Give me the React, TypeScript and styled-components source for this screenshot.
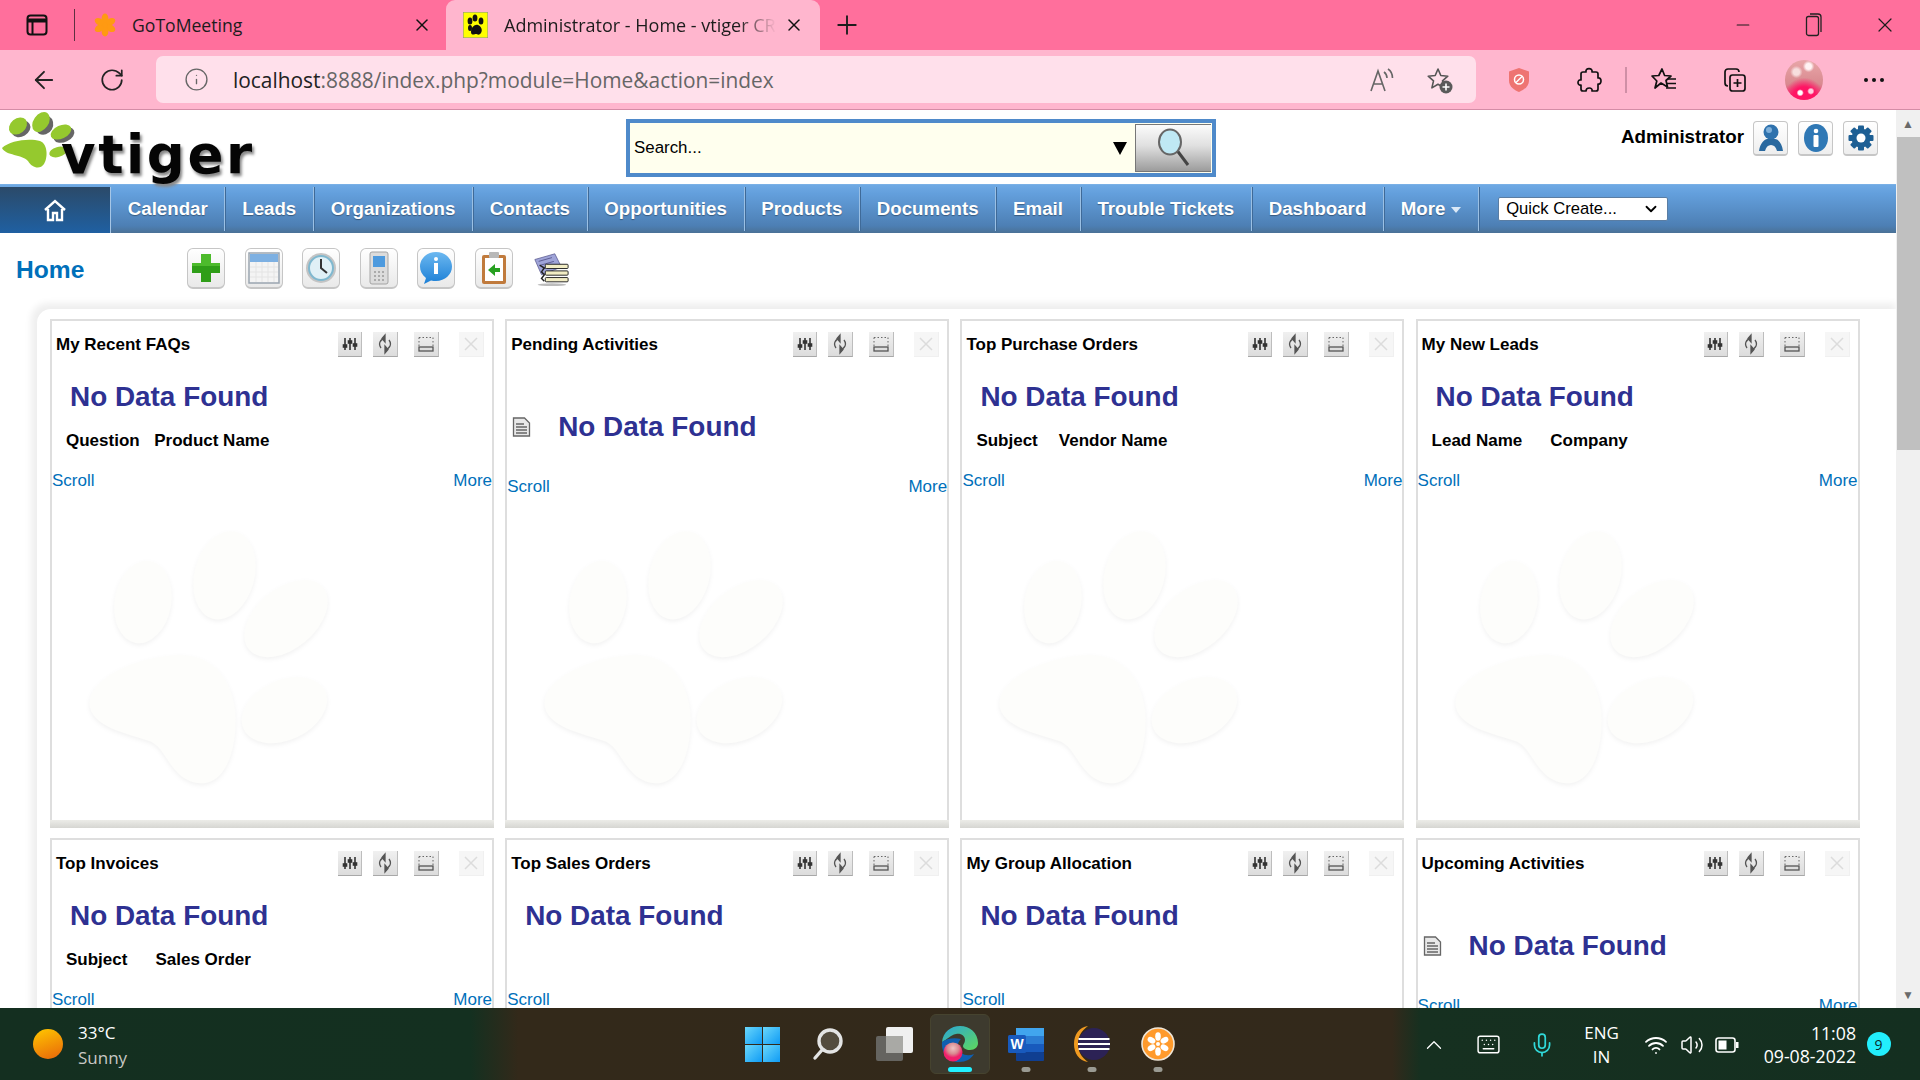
import React from 'react';
import styled, { createGlobalStyle } from 'styled-components';
import { ArrowLeft, RotateCw, Info, X, Plus, Minus, ChevronUp, ChevronDown, Keyboard, Mic, Volume2, Wifi } from 'lucide-react';

const Global = createGlobalStyle`
  html, body { margin: 0; height: 100%; overflow: hidden; background: #fff; }
  #root { height: 100%; }
  * { box-sizing: border-box; }
`;
const Page = styled.div`
  height: 1080px; width: 1920px; display: flex; flex-direction: column; overflow: hidden;
  font-family: "Liberation Sans", Arial, sans-serif;
`;
/* ---------- browser chrome ---------- */
const TabStrip = styled.div`
  height: 50px; flex: none; display: flex; background: #ff6f9c; color: #1c1c1c;
  font-family: "Open Sans", "Noto Sans", sans-serif; font-size: 18px;
`;
const StripSlot = styled.div`
  width: 74px; display: flex; align-items: center; justify-content: center;
`;
const StripDivider = styled.div`
  width: 1px; height: 32px; margin-top: 9px; background: #5d3040;
`;
const Tab = styled.div<{ $active?: boolean }>`
  width: ${p => (p.$active ? 374 : 371)}px; height: 50px; display: flex; align-items: center;
  padding-left: ${p => (p.$active ? 17 : 18)}px; border-radius: 9px 9px 0 0;
  background: ${p => (p.$active ? '#ffb6ce' : 'transparent')};
`;
const TabTitle = styled.div<{ $fade?: boolean }>`
  flex: none; width: 272px; margin-left: ${p => (p.$fade ? 16 : 15)}px; white-space: nowrap; overflow: hidden;
  font-size: ${p => (p.$fade ? 18 : 17.6)}px;
  ${p => p.$fade && 'mask-image: linear-gradient(90deg, #000 86%, transparent 100%);'}
`;
const TabClose = styled.div`
  margin-left: 8px; display: flex; color: #111;
`;
const NewTab = styled.div`
  width: 54px; display: flex; align-items: center; justify-content: center; color: #1c1c1c;
`;
const Grow = styled.div`flex: 1;`;
const WinBtn = styled.div`
  width: 71px; display: flex; align-items: center; justify-content: center;
`;
const Toolbar = styled.div`
  height: 60px; flex: none; display: flex; align-items: center; background: #ffb6ce;
  border-bottom: 1px solid #d48ca6;
`;
const NavButtons = styled.div`
  width: 156px; display: flex; align-items: center; gap: 41px; padding-left: 30px; color: #222;
`;
const UrlBox = styled.div`
  width: 1320px; height: 47px; border-radius: 7px; background: #ffe0eb; display: flex; align-items: center;
  padding: 0 22px 0 28px; color: #666; font-family: "Open Sans", "Noto Sans", sans-serif; font-size: 20.9px;
`;
const UrlText = styled.div`
  margin-left: 24px; white-space: nowrap;
  b { font-weight: 400; color: #222; }
`;
const UrlActions = styled.div`
  margin-left: auto; display: flex; align-items: center; gap: 30px;
`;
const ActionSlots = styled.div`
  display: flex; align-items: center; margin-left: 8px;
`;
const ActionSlot = styled.div`
  width: 70px; display: flex; align-items: center; justify-content: center; color: #1a1a1a;
`;
const ActionDivider = styled.div`
  width: 2px; height: 26px; margin: 0 2px 0 1px; background: #cf8fa6;
`;
const Avatar = styled.div`
  width: 38px; height: 40px; border-radius: 50%;
  background:
    radial-gradient(circle at 62% 16%, #fff3f3 0 7%, transparent 14%),
    radial-gradient(circle at 30% 30%, #f7dede 0 8%, transparent 16%),
    radial-gradient(circle at 40% 82%, #ffffff 0 5%, transparent 9%),
    radial-gradient(circle at 68% 78%, #ffd0e0 0 5%, transparent 9%),
    radial-gradient(circle at 50% 95%, #ff1464 0 26%, transparent 48%),
    linear-gradient(180deg, #e8a6a8, #d98a90 60%, #f02a6e);
`;
/* ---------- app window ---------- */
const Viewport = styled.div`
  flex: 1; min-height: 0; display: flex; background: #fff;
`;
const Content = styled.div`
  flex: 1; min-width: 0; overflow: hidden;
`;
const Scrollbar = styled.div`
  width: 24px; flex: none; background: #f0f0f0; display: flex; flex-direction: column; align-items: center; color: #6a6a6a; font-size: 12px;
`;
const ScrollArrow = styled.div`
  height: 27px; display: flex; align-items: center; justify-content: center; flex: none; width: 100%;
`;
const ScrollThumb = styled.div`
  width: 23px; margin-left: 1px; height: 313px; background: #c0c0c0; flex: none;
`;
const ScrollGap = styled.div`flex: 1;`;
const Masthead = styled.div`
  height: 74px; display: flex; background: #fff;
`;
const Logo = styled.div`
  width: 626px; display: flex; align-items: flex-start; flex: none;
`;
const LogoWord = styled.div`
  margin: 15px 0 0 -19px; font-family: "DejaVu Sans", sans-serif; font-weight: 700; font-size: 53px; line-height: 60px;
  letter-spacing: 2.6px; color: #050505; text-shadow: 2px 3px 3px #888;
`;
const SearchBox = styled.div`
  width: 590px; height: 58px; margin-top: 9px; border: 4px solid #4f8aca; display: flex; background: #ffffee; flex: none;
`;
const SearchText = styled.div`
  flex: 1; display: flex; align-items: center; padding-left: 4px; font-size: 16.9px; color: #000;
`;
const SearchArrow = styled.div`
  width: 0; height: 0; margin-right: 8px; align-self: center; border-left: 7px solid transparent; border-right: 7px solid transparent; border-top: 13px solid #000;
`;
const SearchButton = styled.div`
  width: 76px; margin: 1px 1px 1px 0; border: 1px solid #777; border-right: 0; background: linear-gradient(180deg, #fbfbfb, #e0e0e0 45%, #9c9c9c);
  display: flex; align-items: center; justify-content: center;
`;
const UserArea = styled.div`
  flex: 1; display: flex; padding: 11px 18px 0 0; justify-content: flex-end; gap: 10px;
`;
const UserName = styled.div`
  font-weight: 700; font-size: 18.75px; line-height: 32px; color: #000; margin-right: -1px;
`;
const UserBtn = styled.div`
  width: 35px; height: 35px; border: 1px solid #c6c6c6; border-bottom-width: 2px; border-radius: 4px; background: linear-gradient(#fff, #eeeeee);
  display: flex; align-items: center; justify-content: center;
`;
const Nav = styled.div`
  height: 49px; display: flex; padding-top: 2px; background: linear-gradient(180deg, #6ea9e4 0, #639fdc 18%, #4d7fb4 85%, #4a7196 100%);
  border-top: 1px solid #79b0e6;
`;
const HomeTab = styled.div`
  width: 111px; flex: none; display: flex; align-items: center; justify-content: center;
  background: linear-gradient(180deg, #2b4a69, #1f60a2); border-right: 1px solid #a6c6e6;
`;
const NavItem = styled.div`
  padding: 0 16.75px; display: flex; align-items: center; gap: 6px; color: #fff; font-size: 18.7px; font-weight: 700; white-space: nowrap; height: 44px;
  border-right: 1px solid #9bc0e4; box-shadow: 1px 0 0 #3f6a98;
  text-shadow: 0 1px 1px rgba(0,0,0,.35);
`;
const Caret = styled.span`
  width: 0; height: 0; margin-top: 2px; border-left: 5px solid transparent; border-right: 5px solid transparent; border-top: 6px solid #dbe9f7;
`;
const QuickCreate = styled.div`
  margin: 10px 0 0 19px; width: 170px; height: 24px; border: 1px solid #5a7da3; border-radius: 2px; background: #fff;
  display: flex; align-items: center; justify-content: space-between; padding: 0 7px; font-size: 16.6px; color: #000;
`;
const HomeBar = styled.div`
  height: 65px; display: flex; align-items: flex-start; padding: 15px 0 0 16px;
`;
const HomeTitle = styled.div`
  width: 171px; flex: none; color: #0070ba; font-size: 24.6px; font-weight: 700; line-height: 44px;
`;
const QuickIcons = styled.div`
  display: flex; gap: 19.5px;
`;
const QuickBtn = styled.div<{ $plain?: boolean }>`
  width: 38px; height: 41px; border-radius: 6px; display: flex; align-items: center; justify-content: center;
  ${p => !p.$plain && 'border: 1px solid #c6c6c6; border-bottom-width: 2px; background: linear-gradient(#fff, #e9e9e9);'}
`;
const Board = styled.div`
  margin: 11px 0 0 37px; padding: 10px 0 0 13px; background: #fff; border-radius: 14px 0 0 0;
  box-shadow: -3px -3px 7px 3px #efefef; display: grid; grid-template-columns: repeat(4, 444px); column-gap: 11.2px; row-gap: 10px;
`;
const Panel = styled.div`
  position: relative; height: 509px; border: 2px solid #dedede; display: flex; flex-direction: column; background: #fff; border-bottom: 0;
`;
const PawMark = styled.svg`
  position: absolute; left: 36px; top: 209px; width: 243px; height: 257px; filter: drop-shadow(0 2px 2px rgba(0,0,0,.05));
`;
const PanelHead = styled.div`
  height: 60px; flex: none; display: flex; padding: 11px 8px 0 4px; position: relative;
`;
const PanelTitle = styled.div`
  flex: 1; font-size: 17px; font-weight: 700; line-height: 26px; color: #000;
`;
const HeadBtn = styled.div<{ $gap: number; $faded?: boolean; $w?: number }>`
  width: ${p => p.$w ?? 25}px; height: 25px; margin-left: ${p => p.$gap}px; display: flex; align-items: center; justify-content: center;
  background: ${p => (p.$faded ? '#f6f6f6' : 'linear-gradient(#f0f0f0, #dcdcdc)')};
  border-right: 1px solid ${p => (p.$faded ? '#f0f0f0' : '#bdbdbd')}; border-bottom: 1px solid ${p => (p.$faded ? '#f0f0f0' : '#a8a8a8')};
`;
const NoDataRow = styled.div<{ $doc?: boolean }>`
  display: flex; align-items: center; position: relative; height: 32px; padding-left: ${p => (p.$doc ? 5 : 18)}px;
  margin-top: ${p => (p.$doc ? 30 : 0)}px;
`;
const NoData = styled.div<{ $doc?: boolean }>`
  margin-left: ${p => (p.$doc ? 27 : 0)}px; font-size: 27.9px; font-weight: 700; color: #2e3192; white-space: nowrap;
`;
const Columns = styled.div<{ $gap: number }>`
  height: 20px; margin-top: 18px; padding-left: 14px; display: flex; gap: ${p => p.$gap}px; font-size: 17px; line-height: 20px; font-weight: 700; color: #000; position: relative;
`;
const LinkRow = styled.div<{ $top: number }>`
  margin-top: ${p => p.$top}px; display: flex; justify-content: space-between; font-size: 17px; line-height: 20px; color: #0070ba; position: relative;
`;
const PanelFoot = styled.div`
  margin-top: auto; height: 8px; margin-left: -2px; margin-right: -2px; flex: none; background: linear-gradient(#ecece8, #d6d6d2);
`;
/* ---------- taskbar ---------- */
const Taskbar = styled.div`
  height: 72px; flex: none; display: flex; align-items: center; color: #fff;
  font-family: "Open Sans", "Noto Sans", sans-serif;
  background: linear-gradient(90deg, #142f20 0, #143020 24.5%, #33291a 27%, #33291b 72.5%, #163020 74%, #142f20 100%);
`;
const Weather = styled.div`
  width: 729px; flex: none; padding-left: 33px; display: flex; align-items: center; gap: 15px;
`;
const Sun = styled.div`
  width: 30px; height: 30px; border-radius: 50%; background: linear-gradient(160deg, #ffc800, #e8650a);
`;
const WeatherText = styled.div`
  font-size: 17px; line-height: 25px; margin-top: 2px;
  small { display: block; font-size: 17px; color: #c8c8c4; }
`;
const Apps = styled.div`
  display: flex; align-items: center;
`;
const AppSlot = styled.div<{ $on?: boolean }>`
  width: ${p => (p.$on ? 60 : 66)}px; margin: 0 ${p => (p.$on ? 3 : 0)}px; height: 60px; position: relative; display: flex; align-items: center; justify-content: center; border-radius: 6px;
  ${p => p.$on && 'background: #3d3a2e; border: 1px solid #46432f;'}
`;
const AppMark = styled.span<{ $on?: boolean }>`
  position: absolute; bottom: ${p => (p.$on ? 1 : 2)}px; left: 50%; transform: translateX(-50%);
  width: ${p => (p.$on ? 24 : 9)}px; height: 5px; border-radius: 3px; background: ${p => (p.$on ? '#22f0ff' : '#9a9a92')};
`;
const Tray = styled.div`
  margin-left: auto; display: flex; align-items: center; height: 100%;
`;
const TraySlot = styled.div<{ $w: number }>`
  width: ${p => p.$w}px; display: flex; align-items: center; justify-content: center; text-align: center; font-size: 17px; line-height: 24px; padding-top: 1px;
`;
const Clock = styled.div`
  width: 108px; text-align: right; font-size: 17.7px; line-height: 23px; padding-top: 2px; white-space: nowrap;
`;
const Badge = styled.div`
  width: 24px; height: 24px; margin: 0 29.5px 0 10.5px; border-radius: 50%; background: #22eefc; color: #0a2a2a; font-size: 14px; display: flex; align-items: center; justify-content: center;
`;

/* ---------- drawings ---------- */
const LogoPaw = () => (
  <svg width="80" height="64" viewBox="0 110 80 64">
    <g fill="#333" transform="translate(2 2)" opacity=".75">
      <ellipse cx="19" cy="127" rx="10" ry="7.5" transform="rotate(-30 19 127)" />
      <ellipse cx="42" cy="123" rx="9" ry="10" transform="rotate(30 42 123)" />
      <ellipse cx="62" cy="133" rx="11" ry="7" transform="rotate(-25 62 133)" />
    </g>
    <ellipse cx="18" cy="126" rx="10" ry="7.5" transform="rotate(-40 18 126)" fill="#95c92e" />
    <ellipse cx="41" cy="122" rx="7.5" ry="11" transform="rotate(35 41 122)" fill="#95c92e" />
    <ellipse cx="61" cy="132" rx="11" ry="6.5" transform="rotate(-25 61 132)" fill="#95c92e" />
    <ellipse cx="58" cy="152" rx="9" ry="5" transform="rotate(-15 58 152)" fill="#95c92e" />
    <path d="M2 148 C10 140 30 138 40 141 C48 144 48 158 44 164 C40 170 32 168 28 161 C22 154 6 156 2 148Z" fill="#95c92e" />
  </svg>
);
const Paw = () => (
  <PawMark viewBox="270 90 730 770" fill="#fdfdfb">
    <ellipse cx="435" cy="305" rx="85" ry="125" transform="rotate(10 435 305)" />
    <ellipse cx="680" cy="225" rx="90" ry="135" transform="rotate(15 680 225)" />
    <ellipse cx="865" cy="355" rx="90" ry="145" transform="rotate(50 865 355)" />
    <ellipse cx="860" cy="630" rx="90" ry="135" transform="rotate(65 860 630)" />
    <path d="M275 600 C290 520 450 460 560 465 C650 470 700 540 712 630 C720 720 695 850 610 850 C520 845 510 750 460 725 C390 700 265 680 275 600Z" />
  </PawMark>
);
const TabsIcon = () => (
  <svg width="24" height="24" viewBox="0 0 24 24" fill="none" stroke="#111" strokeWidth="2">
    <rect x="2.5" y="2.5" width="19" height="19" rx="3" />
    <path d="M2.5 7.5h19" strokeWidth="4" /><path d="M7.5 8v13" />
  </svg>
);
const GoToFlower = ({ size = 24, color = '#ff9a12' }: { size?: number; color?: string }) => (
  <svg width={size} height={size} viewBox="0 0 24 24" fill={color}>
    {[0, 60, 120, 180, 240, 300].map(a => (
      <ellipse key={a} cx="12" cy="5.5" rx="3.4" ry="5" transform={`rotate(${a} 12 12)`} />
    ))}
    <circle cx="12" cy="12" r="2.4" />
  </svg>
);
const Favicon = () => (
  <svg width="25" height="26" viewBox="0 0 25 26">
    <rect width="25" height="26" fill="#ffff00" stroke="#7a8a9a" />
    <g fill="#111">
      <ellipse cx="7" cy="9" rx="2.4" ry="3.6" /><ellipse cx="12" cy="6" rx="2.4" ry="3.6" />
      <ellipse cx="18" cy="9" rx="2.4" ry="3.6" /><ellipse cx="7" cy="16" rx="2" ry="3" />
      <path d="M8 20c0-5 4-8 7-7s5 5 3 8-4 1-5 1-5 2-5-2z" />
    </g>
  </svg>
);
const RestoreIcon = () => (
  <svg width="18" height="26" viewBox="0 0 18 26" fill="none" stroke="#222" strokeWidth="1.3">
    <rect x="1.5" y="4.5" width="12" height="19" rx="2" /><path d="M5 2h8a3 3 0 0 1 3 3v15" />
  </svg>
);
const ReadAloud = () => (
  <svg width="28" height="28" viewBox="0 0 28 28" fill="none" stroke="#666" strokeWidth="1.6">
    <path d="M3 25 10 5l7 20M5.500 18h9" /><path d="M16 6c2 1.500 3 3 3 6M20 3c3 2 4.500 5 4.500 9" />
  </svg>
);
const FavAdd = () => (
  <svg width="28" height="28" viewBox="0 0 28 28" fill="none">
    <path d="M12 3l2.800 6.500 7 .7-5.300 4.700 1.600 7-6.100-3.600-6.100 3.600 1.600-7L2.200 10.200l7-.7z" stroke="#555" strokeWidth="1.600" strokeLinejoin="round" />
    <circle cx="20" cy="21" r="6.500" fill="#5a5a5a" /><path d="M20 17.500v7M16.500 21h7" stroke="#fff" strokeWidth="1.600" />
  </svg>
);
const Shield = () => (
  <svg width="24" height="26" viewBox="0 0 24 26">
    <path d="M12 1l10 3.500v9c0 6-5 9.500-10 11.500C7 23 2 19.500 2 13.500v-9z" fill="#ee7472" />
    <circle cx="12" cy="12.500" r="4.500" fill="none" stroke="#fff" strokeWidth="1.500" /><path d="M9 15.500l6-6" stroke="#fff" strokeWidth="1.500" />
  </svg>
);
const PuzzleOutline = () => (
  <svg width="26" height="28" viewBox="0 0 26 28" fill="none" stroke="#111" strokeWidth="1.700" strokeLinejoin="round">
    <path d="M7 6h3C9 1.500 17 1.500 16 6h4a2 2 0 0 1 2 2v4c4-1 4 7 0 6v5a2 2 0 0 1-2 2h-4c1-4-6-4-6 0H7a2 2 0 0 1-2-2v-4c-4 1-4-6 0-5V8a2 2 0 0 1 2-2z" />
  </svg>
);
const FavList = () => (
  <svg width="28" height="28" viewBox="0 0 28 28" fill="none" stroke="#111" strokeWidth="1.700" strokeLinejoin="round">
    <path d="M12 3l2.600 6.500 6.400.5-5 4.500 1.500 6.500L11 17l-6 5 1.800-7L2 10l6.800-.5z" /><path d="M18 13h8M17 17.500h9M16 22h10" />
  </svg>
);
const Collections = () => (
  <svg width="28" height="28" viewBox="0 0 28 28" fill="none" stroke="#111" strokeWidth="1.700">
    <path d="M5 17V6a3 3 0 0 1 3-3h8a3 3 0 0 1 3 3M5 17c0 2 1 3 3 3" />
    <rect x="10" y="9" width="15" height="16" rx="2.500" /><path d="M17.500 13v8M13.500 17h8" />
  </svg>
);
const Dots = () => (
  <svg width="22" height="6" viewBox="0 0 22 6" fill="#111"><circle cx="3" cy="3" r="2" /><circle cx="11" cy="3" r="2" /><circle cx="19" cy="3" r="2" /></svg>
);
const Magnifier = () => (
  <svg width="38" height="40" viewBox="0 0 38 40">
    <path d="M21 21l12 16" stroke="#444" strokeWidth="3" />
    <ellipse cx="15" cy="14" rx="11" ry="12.500" fill="#bfe8f4" stroke="#666" strokeWidth="2" />
  </svg>
);
const UserIcon = () => (
  <svg width="28" height="30" viewBox="0 0 28 30">
    <circle cx="14" cy="9" r="7.500" fill="#2f72ad" /><circle cx="12" cy="7" r="3" fill="#7fb0da" />
    <path d="M2 28c1-8 6-12 8-12h8c3 0 7 4 8 12h-6c-1-4-3-6-6-6s-5 2-6 6z" fill="#2a699f" />
  </svg>
);
const InfoIcon = () => (
  <svg width="26" height="30" viewBox="0 0 26 30">
    <ellipse cx="13" cy="15" rx="12" ry="14" fill="#2f78b5" />
    <circle cx="13" cy="8" r="2.300" fill="#fff" /><rect x="10.500" y="12" width="5" height="12" rx="1" fill="#fff" />
  </svg>
);
const GearIcon = () => (
  <svg width="28" height="28" viewBox="0 0 28 28">
    <g fill="#1d5f94">
      {[0, 45, 90, 135, 180, 225, 270, 315].map(a => <rect key={a} x="11" y="1.500" width="6" height="7" rx="1" transform={`rotate(${a} 14 14)`} />)}
    </g>
    <circle cx="14" cy="14" r="9.500" fill="#1d5f94" /><circle cx="14" cy="14" r="4.500" fill="#fff" />
  </svg>
);
const HomeIcon = () => (
  <svg width="24" height="24" viewBox="0 0 24 24" fill="none" stroke="#fff" strokeWidth="2.400" strokeLinejoin="miter">
    <path d="M2 12 12 3l10 9M5 11v11h5v-7h4v7h5V11" />
  </svg>
);
const QPlus = () => (
  <svg width="32" height="32" viewBox="0 0 32 32"><path d="M11 2h10v9h9v10h-9v9H11v-9H2V11h9z" fill="#2f9e18" /><path d="M11 2h10v9h9v3H2v-3h9z" fill="#4dbb2c" /></svg>
);
const QCalendar = () => (
  <svg width="32" height="34" viewBox="0 0 32 34">
    <rect x="1" y="2" width="30" height="30" fill="#f4f4f4" stroke="#9aa5b0" strokeWidth="1.500" /><rect x="2" y="3" width="28" height="8" fill="#7db0e2" />
    <path d="M2 16h28M2 21h28M2 26h28M8 11v20M14 11v20M20 11v20M26 11v20" stroke="#e4e4e4" />
  </svg>
);
const QClock = () => (
  <svg width="32" height="32" viewBox="0 0 32 32">
    <circle cx="16" cy="16" r="15" fill="#c4c4c4" /><circle cx="16" cy="16" r="12" fill="#e0f0f6" stroke="#7fb8cf" strokeWidth="2" />
    <path d="M16 7v9l6 5" stroke="#333" strokeWidth="2" fill="none" />
  </svg>
);
const QPhone = () => (
  <svg width="24" height="34" viewBox="0 0 24 34">
    <rect x="3" y="1" width="18" height="32" rx="2" fill="#dcdcdc" stroke="#a4a4a4" /><rect x="6" y="5" width="12" height="11" fill="#4d9ade" />
    <path d="M7 21h10M7 25h10M7 29h10" stroke="#aaa" strokeWidth="2" strokeDasharray="2 2" />
  </svg>
);
const QBubble = () => (
  <svg width="36" height="36" viewBox="0 0 36 36">
    <defs><linearGradient id="qb" x1="0" y1="0" x2="0" y2="1"><stop offset="0" stopColor="#6cb8f0" /><stop offset="1" stopColor="#1b7fd6" /></linearGradient></defs>
    <path d="M18 2c9 0 16 6.500 16 14.500S27 31 18 31c-2 0-3 0-5-.500L6 34l2-6C4 25 2 21 2 16.500 2 8.500 9 2 18 2z" fill="url(#qb)" />
    <circle cx="18" cy="9" r="2" fill="#fff" /><rect x="16" y="13" width="4" height="11" fill="#fff" />
  </svg>
);
const QClip = () => (
  <svg width="28" height="34" viewBox="0 0 28 34">
    <rect x="2" y="4" width="24" height="29" rx="2" fill="#c07a3c" /><rect x="5" y="7" width="18" height="23" fill="#fff" />
    <rect x="9" y="1" width="10" height="6" rx="1" fill="#b8b8b8" /><path d="M8 19l7-6v4h5v4h-5v4z" fill="#27a020" />
  </svg>
);
const QList = () => (
  <svg width="40" height="36" viewBox="0 0 40 36">
    <path d="M3 8 24 2l7 14-21 8z" fill="#9fa4d8" stroke="#5a5a90" strokeWidth=".8" />
    <path d="M7 10l14-4M9 14l14-4M11 18l14-4" stroke="#5a5a90" />
    <g fill="#f2edc4" stroke="#222"><rect x="14" y="13" width="24" height="4.500" rx="1" /><rect x="14" y="20" width="24" height="4.500" rx="1" /><rect x="14" y="27" width="24" height="4.500" rx="1" /></g>
    <path d="M8 14l5 3-3 4 3 3-3 4 3 3" stroke="#222" strokeWidth="1.500" fill="none" />
    <ellipse cx="21" cy="34.500" rx="15" ry="1.500" fill="#bbb" />
  </svg>
);
const Sliders = () => (
  <svg width="16" height="16" viewBox="0 0 16 16" stroke="#333" strokeWidth="1.600" fill="#333">
    <path d="M3 2v12M8 2v12M13 2v12" /><rect x="1.500" y="9" width="3" height="2" /><rect x="6.500" y="5" width="3" height="2" /><rect x="11.500" y="8" width="3" height="2" />
  </svg>
);
const Cycle = () => (
  <svg width="14" height="22" viewBox="0 0 14 22" fill="none" stroke="#555" strokeWidth="1.300">
    <path d="M3 15C0 11 2 6 7 5.500M11 7c3 4 1 9-4 9.500" /><path d="M7 2v7L4 5.500zM7 13v7l3-3.500z" fill="#555" />
  </svg>
);
const Minimize = () => (
  <svg width="18" height="18" viewBox="0 0 18 18" fill="none">
    <path d="M2 2.500h14M2 2.500v9M16 2.500v9" stroke="#666" strokeDasharray="1.500 2" />
    <rect x="2" y="12" width="14" height="4" fill="#ddd" stroke="#555" strokeWidth="1.300" />
  </svg>
);
const Cross = () => (
  <svg width="16" height="16" viewBox="0 0 16 16" stroke="#dcdcdc" strokeWidth="1.500"><path d="M2 2l12 12M14 2 2 14" /></svg>
);
const Doc = () => (
  <svg width="19" height="20" viewBox="0 0 19 20" fill="#e8e8e8" stroke="#666" strokeWidth="1.300">
    <path d="M1.500 1h11l5 5v13h-16z" /><path d="M4 7h8M4 10h11M4 13h11M4 16h11" fill="none" />
  </svg>
);
const WinLogo = () => (
  <svg width="35" height="35" viewBox="0 0 35 35">
    <defs><linearGradient id="wl" x1="0" y1="0" x2="1" y2="1"><stop offset="0" stopColor="#6ad7fb" /><stop offset="1" stopColor="#0f9bf5" /></linearGradient></defs>
    <rect width="17" height="17" fill="url(#wl)" /><rect x="18" width="17" height="17" fill="url(#wl)" /><rect y="18" width="17" height="17" fill="url(#wl)" /><rect x="18" y="18" width="17" height="17" fill="url(#wl)" />
  </svg>
);
const SearchGlyph = () => (
  <svg width="32" height="34" viewBox="0 0 32 34" fill="none" stroke="#e4e4e4" strokeWidth="3.400">
    <circle cx="18" cy="14" r="11" fill="#544c3e" /><path d="M10 23l-7 8" strokeLinecap="round" />
  </svg>
);
const TaskView = () => (
  <svg width="37" height="34" viewBox="0 0 37 34">
    <rect x="10" y="0" width="27" height="26" rx="2" fill="#f0f0f0" /><rect x="0" y="9" width="27" height="25" rx="2" fill="#6a6a68" opacity=".9" />
    <rect x="10" y="9" width="17" height="17" fill="#a9a9a5" />
  </svg>
);
const Edge = () => (
  <svg width="38" height="38" viewBox="0 0 38 38">
    <defs>
      <linearGradient id="eg" x1="0" y1="0" x2="1" y2="1"><stop offset="0" stopColor="#2aa6d8" /><stop offset="1" stopColor="#5fd85c" /></linearGradient>
      <radialGradient id="ep" cx=".5" cy=".3"><stop offset="0" stopColor="#eec4c4" /><stop offset=".6" stopColor="#d98a90" /><stop offset="1" stopColor="#f0206c" /></radialGradient>
    </defs>
    <path d="M1 17C2 7 10 1 19 1c10 0 18 7 18 17 0 4-3 7-8 7-4 0-7-2-7-4 0-2 2-3 2-6 0-4-4-7-9-6-6 1-9 6-14 8z" fill="url(#eg)" />
    <path d="M1 17c-1 10 6 20 17 20 7 0 12-3 15-8-7 3-15 0-16-6-1-4 1-7 3-9-8-2-15 0-19 3z" fill="#0f5fb0" />
    <circle cx="12" cy="27" r="9.500" fill="url(#ep)" />
  </svg>
);
const Word = () => (
  <svg width="36" height="33" viewBox="0 0 36 33">
    <rect x="8" y="0" width="28" height="8" fill="#41a5ee" /><rect x="8" y="8" width="28" height="8" fill="#2b7cd3" /><rect x="8" y="16" width="28" height="8" fill="#185abd" /><rect x="8" y="24" width="28" height="9" rx="1" fill="#103f91" />
    <rect x="0" y="7" width="18" height="18" rx="1.500" fill="#185abd" />
    <text x="9" y="21" textAnchor="middle" fontFamily="Liberation Sans" fontWeight="700" fontSize="14" fill="#fff">W</text>
  </svg>
);
const Eclipse = () => (
  <svg width="36" height="36" viewBox="0 0 36 36">
    <path d="M14 0C5 1 0 9 0 18s5 17 14 18C7 31 4 25 4 18S7 5 14 0z" fill="#f09a20" />
    <circle cx="20" cy="18" r="16" fill="#2c2255" />
    <path d="M4.500 13h31M4 18h32M4.500 23h31" stroke="#fff" strokeWidth="2" />
  </svg>
);
const GoToBadge = () => (
  <svg width="34" height="34" viewBox="0 0 34 34">
    <circle cx="17" cy="17" r="16" fill="#ff9a2c" stroke="#efe6d8" strokeWidth="1.600" />
    <g fill="#fff">{[0, 60, 120, 180, 240, 300].map(a => <ellipse key={a} cx="17" cy="9.500" rx="2.800" ry="4.200" transform={`rotate(${a} 17 17)`} />)}<circle cx="17" cy="17" r="2" /></g>
  </svg>
);
const Battery = () => (
  <svg width="24" height="16" viewBox="0 0 24 16" fill="none">
    <rect x="1" y="1" width="19" height="14" rx="2.500" stroke="#fff" strokeWidth="1.600" /><rect x="3.500" y="3.500" width="8" height="9" fill="#fff" /><rect x="21" y="5" width="2.500" height="6" fill="#fff" />
  </svg>
);

/* ---------- data ---------- */
type PanelData = { title: string; cols?: string[]; gap?: number; doc?: boolean; more?: boolean };
const panels: PanelData[] = [
  { title: 'My Recent FAQs', cols: ['Question', 'Product Name'], gap: 14.5, more: true },
  { title: 'Pending Activities', doc: true, more: true },
  { title: 'Top Purchase Orders', cols: ['Subject', 'Vendor Name'], gap: 21, more: true },
  { title: 'My New Leads', cols: ['Lead Name', 'Company'], gap: 28, more: true },
  { title: 'Top Invoices', cols: ['Subject', 'Sales Order'], gap: 28, more: true },
  { title: 'Top Sales Orders' },
  { title: 'My Group Allocation' },
  { title: 'Upcoming Activities', doc: true, more: true },
];
const navItems = ['Calendar', 'Leads', 'Organizations', 'Contacts', 'Opportunities', 'Products', 'Documents', 'Email', 'Trouble Tickets', 'Dashboard'];

const DashPanel = ({ data }: { data: PanelData }) => (
  <Panel>
    <Paw />
    <PanelHead>
      <PanelTitle>{data.title}</PanelTitle>
      <HeadBtn $gap={0} $w={24}><Sliders /></HeadBtn>
      <HeadBtn $gap={11}><Cycle /></HeadBtn>
      <HeadBtn $gap={16}><Minimize /></HeadBtn>
      <HeadBtn $gap={20} $faded><Cross /></HeadBtn>
    </PanelHead>
    <NoDataRow $doc={data.doc}>
      {data.doc && <Doc />}
      <NoData $doc={data.doc}>No Data Found</NoData>
    </NoDataRow>
    <Columns $gap={data.gap ?? 0}>
      {data.doc ? null : data.cols?.map(c => <span key={c}>{c}</span>)}
    </Columns>
    <LinkRow $top={data.doc ? -4 : 20}>
      <span>Scroll</span>
      {data.more && <span>More</span>}
    </LinkRow>
    <PanelFoot />
  </Panel>
);

export default function App() {
  return (
    <Page>
      <Global />
      <TabStrip>
        <StripSlot><TabsIcon /></StripSlot>
        <StripDivider />
        <Tab>
          <GoToFlower />
          <TabTitle>GoToMeeting</TabTitle>
          <TabClose><X size={20} strokeWidth={1.8} /></TabClose>
        </Tab>
        <Tab $active>
          <Favicon />
          <TabTitle $fade>Administrator - Home - vtiger CRM 5</TabTitle>
          <TabClose><X size={20} strokeWidth={1.8} /></TabClose>
        </Tab>
        <NewTab><Plus size={30} strokeWidth={1.5} /></NewTab>
        <Grow />
        <WinBtn><Minus size={20} strokeWidth={1.3} /></WinBtn>
        <WinBtn><RestoreIcon /></WinBtn>
        <WinBtn><X size={24} strokeWidth={1.2} /></WinBtn>
      </TabStrip>
      <Toolbar>
        <NavButtons>
          <ArrowLeft size={28} strokeWidth={1.6} />
          <RotateCw size={26} strokeWidth={1.6} />
        </NavButtons>
        <UrlBox>
          <Info size={25} strokeWidth={1.3} color="#666" />
          <UrlText><b>localhost</b>:8888/index.php?module=Home&amp;action=index</UrlText>
          <UrlActions><ReadAloud /><FavAdd /></UrlActions>
        </UrlBox>
        <ActionSlots>
          <ActionSlot><Shield /></ActionSlot>
          <ActionSlot><PuzzleOutline /></ActionSlot>
          <ActionDivider />
          <ActionSlot><FavList /></ActionSlot>
          <ActionSlot><Collections /></ActionSlot>
          <ActionSlot><Avatar /></ActionSlot>
          <ActionSlot><Dots /></ActionSlot>
        </ActionSlots>
      </Toolbar>
      <Viewport>
        <Content>
          <Masthead>
            <Logo><LogoPaw /><LogoWord>vtiger</LogoWord></Logo>
            <SearchBox>
              <SearchText>Search...</SearchText>
              <SearchArrow />
              <SearchButton><Magnifier /></SearchButton>
            </SearchBox>
            <UserArea>
              <UserName>Administrator</UserName>
              <UserBtn><UserIcon /></UserBtn>
              <UserBtn><InfoIcon /></UserBtn>
              <UserBtn><GearIcon /></UserBtn>
            </UserArea>
          </Masthead>
          <Nav>
            <HomeTab><HomeIcon /></HomeTab>
            {navItems.map(n => <NavItem key={n}>{n}</NavItem>)}
            <NavItem>More <Caret /></NavItem>
            <QuickCreate>Quick Create...<ChevronDown size={18} strokeWidth={2.4} /></QuickCreate>
          </Nav>
          <HomeBar>
            <HomeTitle>Home</HomeTitle>
            <QuickIcons>
              <QuickBtn><QPlus /></QuickBtn>
              <QuickBtn><QCalendar /></QuickBtn>
              <QuickBtn><QClock /></QuickBtn>
              <QuickBtn><QPhone /></QuickBtn>
              <QuickBtn><QBubble /></QuickBtn>
              <QuickBtn><QClip /></QuickBtn>
              <QuickBtn $plain><QList /></QuickBtn>
            </QuickIcons>
          </HomeBar>
          <Board>
            {panels.map(p => <DashPanel key={p.title} data={p} />)}
          </Board>
        </Content>
        <Scrollbar>
          <ScrollArrow>▲</ScrollArrow>
          <ScrollThumb />
          <ScrollGap />
          <ScrollArrow>▼</ScrollArrow>
        </Scrollbar>
      </Viewport>
      <Taskbar>
        <Weather>
          <Sun />
          <WeatherText>33°C<small>Sunny</small></WeatherText>
        </Weather>
        <Apps>
          <AppSlot><WinLogo /></AppSlot>
          <AppSlot><SearchGlyph /></AppSlot>
          <AppSlot><TaskView /></AppSlot>
          <AppSlot $on><Edge /><AppMark $on /></AppSlot>
          <AppSlot><Word /><AppMark /></AppSlot>
          <AppSlot><Eclipse /><AppMark /></AppSlot>
          <AppSlot><GoToBadge /><AppMark /></AppSlot>
        </Apps>
        <Tray>
          <TraySlot $w={54}><ChevronUp size={26} strokeWidth={1.2} /></TraySlot>
          <TraySlot $w={54}><Keyboard size={25} strokeWidth={1.4} /></TraySlot>
          <TraySlot $w={54}><Mic size={26} strokeWidth={1.6} color="#30d8d8" /></TraySlot>
          <TraySlot $w={65}>ENG<br />IN</TraySlot>
          <TraySlot $w={44}><Wifi size={24} strokeWidth={1.8} /></TraySlot>
          <TraySlot $w={28}><Volume2 size={24} strokeWidth={1.5} /></TraySlot>
          <TraySlot $w={42}><Battery /></TraySlot>
          <Clock>11:08<br />09-08-2022</Clock>
          <Badge>9</Badge>
        </Tray>
      </Taskbar>
    </Page>
  );
}
